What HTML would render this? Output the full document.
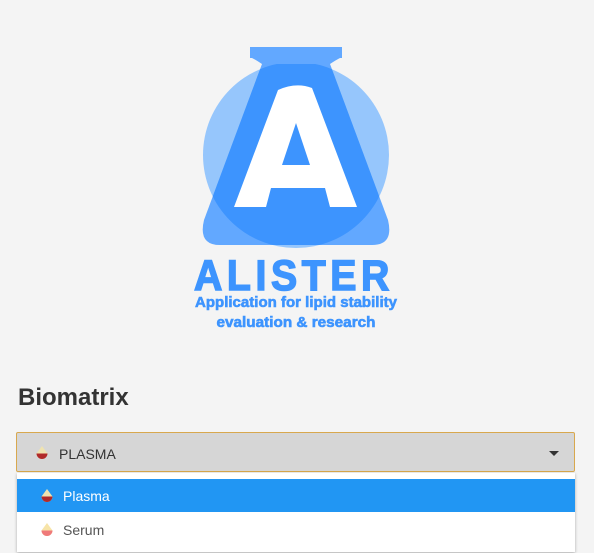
<!DOCTYPE html>
<html><head><style>
body{margin:0;width:594px;height:553px;background:#f4f4f4;font-family:"Liberation Sans",sans-serif;position:relative;overflow:hidden}
.h{position:absolute;left:18px;top:384px;font-size:24px;font-weight:bold;color:#333}
.sel{position:absolute;left:16px;top:432px;width:557px;height:38px;background:#d6d6d6;border:1px solid #d8a84e;border-radius:2px}
.sel span{position:absolute;left:42px;top:13px;font-size:14px;color:#333}
.arr{position:absolute;right:15px;top:18px;width:0;height:0;border-left:5px solid transparent;border-right:5px solid transparent;border-top:5px solid #333}
.menu{position:absolute;left:17px;top:473px;width:558px;height:79px;background:#fff;box-shadow:0 1px 3px rgba(0,0,0,.3)}
.it{position:absolute;left:0;width:558px;height:33px;font-size:14px}
.it span{position:absolute;left:46px;top:9px}
.drop{position:absolute;width:12px;height:13px}
</style></head><body>
<svg width="594" height="340" style="position:absolute;left:0;top:0">
<defs>
<clipPath id="c"><circle cx="296" cy="155" r="93"/></clipPath>
<path id="f" d="M262 64 L330 64 L388 220 Q394 245 372 245 L220 245 Q198 245 204 220 Z"/>
</defs>
<circle cx="296" cy="155" r="93" fill="#96c6fc"/>
<rect x="250" y="47" width="92" height="11" fill="#62a8ff"/>
<path d="M262 64 Q256 60 252 58 L340 58 Q336 60 330 64 Z" fill="#62a8ff"/>
<use href="#f" fill="#62a8ff"/>
<use href="#f" fill="#3d94fe" clip-path="url(#c)"/>
<path d="M278 90 Q296 82 312 88 L357 207 L330 207 L325 188 L271 188 L266 207 L234 207 Z" fill="#fff"/>
<path d="M296 123 L310 165 L282 165 Z" fill="#3d94fe"/>
<text x="294" y="290" text-anchor="middle" font-family="Liberation Sans" font-weight="bold" font-size="43" fill="#3d94fe" stroke="#3d94fe" stroke-width="1.5" letter-spacing="5" textLength="200" lengthAdjust="spacingAndGlyphs">ALISTER</text>
<text x="296" y="307" text-anchor="middle" font-family="Liberation Sans" font-weight="bold" font-size="15" fill="#3d94fe" stroke="#3d94fe" stroke-width="0.6" textLength="202" lengthAdjust="spacingAndGlyphs">Application for lipid stability</text>
<text x="296" y="327" text-anchor="middle" font-family="Liberation Sans" font-weight="bold" font-size="15" fill="#3d94fe" stroke="#3d94fe" stroke-width="0.6" textLength="159" lengthAdjust="spacingAndGlyphs">evaluation &amp; research</text>
</svg>
<div class="h">Biomatrix</div>
<div class="sel">
<svg class="drop" style="left:19px;top:13px" viewBox="0 0 12 13"><path d="M6 0 L11.5 7.5 A5.5 5.5 0 0 1 0.5 7.5 Z" fill="#efe3b0"/><path d="M0.5 7.5 L11.5 7.5 A5.5 5.5 0 0 1 0.5 7.5 Z" fill="#b02a2a"/></svg>
<span>PLASMA</span><div class="arr"></div></div>
<div class="menu">
<div class="it" style="top:6px;background:#2196f3;color:#fff">
<svg class="drop" style="left:24px;top:10px" viewBox="0 0 12 13"><path d="M6 0 L11.5 7.5 A5.5 5.5 0 0 1 0.5 7.5 Z" fill="#efe3b0"/><path d="M0.5 7.5 L11.5 7.5 A5.5 5.5 0 0 1 0.5 7.5 Z" fill="#b02a2a"/></svg>
<span>Plasma</span></div>
<div class="it" style="top:40px;color:#555">
<svg class="drop" style="left:24px;top:10px" viewBox="0 0 12 13"><path d="M6 0 L11.5 7.5 A5.5 5.5 0 0 1 0.5 7.5 Z" fill="#f7e4a8"/><path d="M0.5 7.5 L11.5 7.5 A5.5 5.5 0 0 1 0.5 7.5 Z" fill="#ef7a7a"/></svg>
<span>Serum</span></div>
</div>
</body></html>
